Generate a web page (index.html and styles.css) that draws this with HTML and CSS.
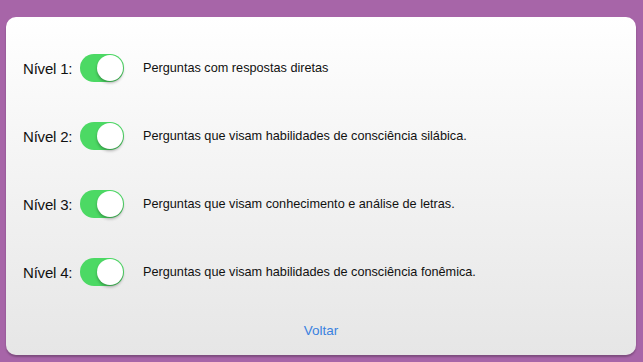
FILE: index.html
```html
<!DOCTYPE html>
<html lang="pt">
<head>
    <meta charset="UTF-8">
    <title>Níveis</title>
    <link rel="stylesheet" href="styles.css">
</head>
<body>
    <div class="card">
        <div class="level-list">
            <div class="level-row">
                <span class="level-label">Nível 1:</span>
                <span class="switch on"><span class="knob"></span></span>
                <span class="level-desc">Perguntas com respostas diretas</span>
            </div>
            <div class="level-row">
                <span class="level-label">Nível 2:</span>
                <span class="switch on"><span class="knob"></span></span>
                <span class="level-desc">Perguntas que visam habilidades de consciência silábica.</span>
            </div>
            <div class="level-row">
                <span class="level-label">Nível 3:</span>
                <span class="switch on"><span class="knob"></span></span>
                <span class="level-desc">Perguntas que visam conhecimento e análise de letras.</span>
            </div>
            <div class="level-row">
                <span class="level-label">Nível 4:</span>
                <span class="switch on"><span class="knob"></span></span>
                <span class="level-desc">Perguntas que visam habilidades de consciência fonêmica.</span>
            </div>
        </div>
        <div class="footer">
            <a class="back-link" href="#">Voltar</a>
        </div>
    </div>
</body>
</html>
```

FILE: styles.css
```css
* {
    margin: 0;
    padding: 0;
    box-sizing: border-box;
    font-family: 'Liberation Sans', Arial, sans-serif;
}

body {
    background-color: #A765A8;
    height: 100vh;
    overflow: hidden;
    padding: 17px 7px 7px 6px;
}

.card {
    height: 338px;
    border-radius: 10px;
    background: linear-gradient(to bottom, #FFFFFF 0%, #F6F6F6 35%, #E6E6E6 100%);
    box-shadow: 0 2px 2px rgba(0, 0, 0, 0.25);
    padding-top: 17px;
    display: flex;
    flex-direction: column;
}

.level-row {
    height: 68px;
    display: flex;
    align-items: center;
    padding-left: 17px;
}

.level-label {
    width: 57px;
    font-size: 15px;
    letter-spacing: -0.2px;
    color: #111111;
}

.switch {
    position: relative;
    width: 44px;
    height: 28px;
    border-radius: 14px;
    background-color: #4CD964;
    margin-right: 19px;
}

.knob {
    position: absolute;
    top: 1px;
    right: 1px;
    width: 26px;
    height: 26px;
    border-radius: 50%;
    background-color: #FFFFFF;
    box-shadow: 0 2px 3px rgba(0, 0, 0, 0.3);
}

.level-desc {
    font-size: 12.7px;
    color: #111111;
}

.footer {
    flex: 1;
    display: flex;
    align-items: center;
    justify-content: center;
}

.back-link {
    font-size: 13.5px;
    color: #3A82E0;
    text-decoration: none;
}
```
